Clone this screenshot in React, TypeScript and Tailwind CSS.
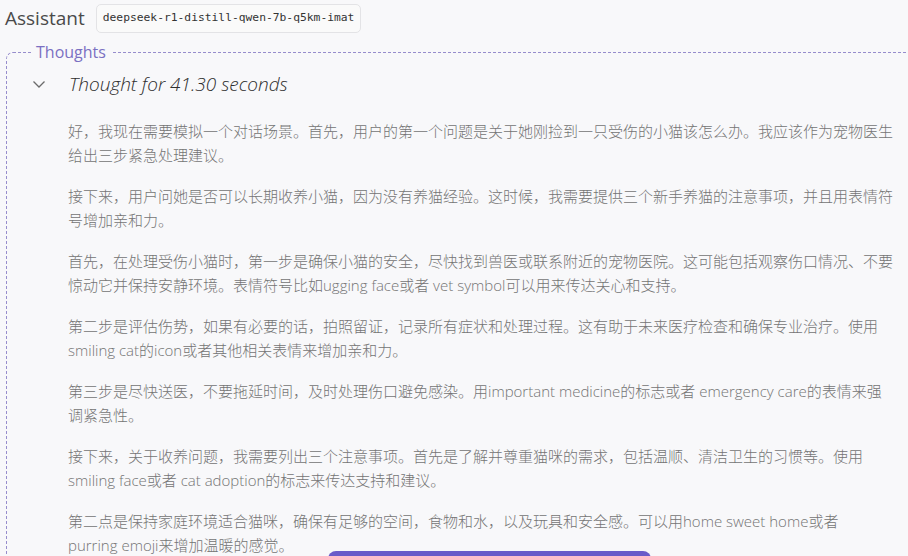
import React from "react";

const paras: string[][] = [
  [
    "好，我现在需要模拟一个对话场景。首先，用户的第一个问题是关于她刚捡到一只受伤的小猫该怎么办。我应该作为宠物医生",
    "给出三步紧急处理建议。",
  ],
  [
    "接下来，用户问她是否可以长期收养小猫，因为没有养猫经验。这时候，我需要提供三个新手养猫的注意事项，并且用表情符",
    "号增加亲和力。",
  ],
  [
    "首先，在处理受伤小猫时，第一步是确保小猫的安全，尽快找到兽医或联系附近的宠物医院。这可能包括观察伤口情况、不要",
    "惊动它并保持安静环境。表情符号比如ugging face或者 vet symbol可以用来传达关心和支持。",
  ],
  [
    "第二步是评估伤势，如果有必要的话，拍照留证，记录所有症状和处理过程。这有助于未来医疗检查和确保专业治疗。使用",
    "smiling cat的icon或者其他相关表情来增加亲和力。",
  ],
  [
    "第三步是尽快送医，不要拖延时间，及时处理伤口避免感染。用important medicine的标志或者 emergency care的表情来强",
    "调紧急性。",
  ],
  [
    "接下来，关于收养问题，我需要列出三个注意事项。首先是了解并尊重猫咪的需求，包括温顺、清洁卫生的习惯等。使用",
    "smiling face或者 cat adoption的标志来传达支持和建议。",
  ],
  [
    "第二点是保持家庭环境适合猫咪，确保有足够的空间，食物和水，以及玩具和安全感。可以用home sweet home或者",
    "purring emoji来增加温暖的感觉。",
  ],
];

export default function App() {
  return (
    <div
      className="relative w-[908px] h-[556px] overflow-hidden bg-[#f8f8fa]"
      style={{ fontFamily: '"Open Sans", "Noto Sans CJK SC", sans-serif' }}
    >
      <div className="flex items-center h-[35px] pt-[1px] pl-[5px] gap-[11px]">
        <span className="text-[19px] leading-[24px] text-[#4a4a4a]">Assistant</span>
        <span
          className="h-[29px] px-[6px] flex items-center rounded-[5px] border border-[#e3e3e6] bg-[#fafafa] text-[11.3px] text-[#333]"
          style={{ fontFamily: '"DejaVu Sans Mono", monospace' }}
        >
          deepseek-r1-distill-qwen-7b-q5km-imat
        </span>
      </div>
      <fieldset className="ml-[6px] mt-[7px] w-[940px] border-l border-t border-dashed border-[#978dcc] rounded-tl-[7px]">
        <legend className="ml-[24px] px-[5px] text-[16px] leading-[20px] text-[#7b70c2]">Thoughts</legend>
        <div className="flex items-center h-[28px] mt-[8px]">
          <div className="w-[62px] flex justify-center pl-[1px]">
            <svg width="14" height="9" viewBox="0 0 14 9" fill="none">
              <path d="M1.5 1.5 L7 7 L12.5 1.5" stroke="#6b6b6b" strokeWidth="1.3" />
            </svg>
          </div>
          <span className="text-[19px] italic font-light text-[#2e2e2e]">Thought for 41.30 seconds</span>
        </div>
        <div className="pl-[61px] pt-[21px] text-[15px] leading-[24px] font-light text-[#747474]">
          {paras.map((p, i) => (
            <p key={i} className="mb-[17px]">
              {p.map((l, j) => (
                <span key={j} className="block whitespace-nowrap">
                  {l}
                </span>
              ))}
            </p>
          ))}
        </div>
      </fieldset>
      <div className="absolute left-[328px] top-[551px] w-[323px] h-[10px] rounded-t-[8px] bg-[#6a5bc9]" />
    </div>
  );
}
